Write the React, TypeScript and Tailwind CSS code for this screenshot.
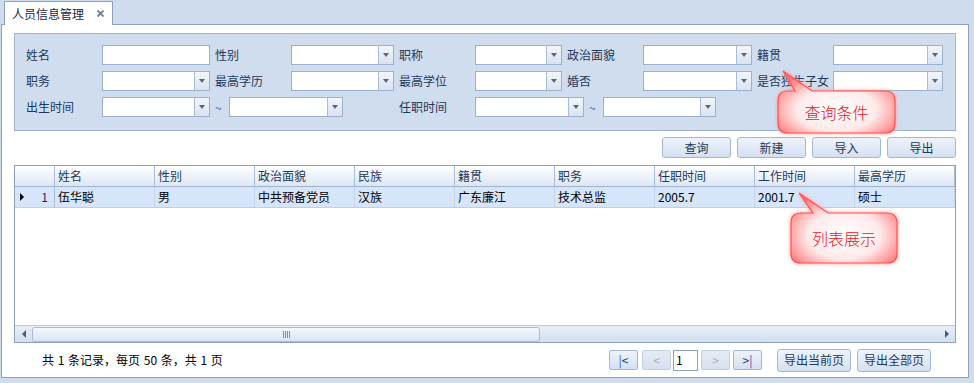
import type { ReactNode } from 'react'

const columns = ['姓名', '性别', '政治面貌', '民族', '籍贯', '职务', '任职时间', '工作时间', '最高学历']
const row = ['伍华聪', '男', '中共预备党员', '汉族', '广东廉江', '技术总监', '2005.7', '2001.7', '硕士']

function Label({ children, first = false }: { children: ReactNode; first?: boolean }) {
  return (
    <span
      className={
        'w-[76px] shrink-0 whitespace-nowrap text-[12px] leading-[20px] text-[#1e395b] ' +
        (first ? '' : 'ml-[5px]')
      }
    >
      {children}
    </span>
  )
}

function Field({ w, dd = true }: { w: string; dd?: boolean }) {
  return (
    <div className={'flex h-[20px] shrink-0 border border-[#9bb0cc] bg-white ' + w}>
      <div className="flex-1" />
      {dd && (
        <div className="flex w-[15px] items-center justify-center border-l border-[#a9bcd5] bg-gradient-to-b from-[#f3f6fb] to-[#d9e3f1]">
          <div className="h-0 w-0 border-x-[3px] border-t-[4px] border-x-transparent border-t-[#56667d]" />
        </div>
      )}
    </div>
  )
}

function Tilde() {
  return <span className="w-[19px] shrink-0 pl-[5px] pt-[2px] text-[12px] leading-[20px] text-[#3d5a99]">~</span>
}

function Btn({ children, w = 'w-[69px]', h = 'h-[21px]' }: { children: ReactNode; w?: string; h?: string }) {
  return (
    <div
      className={
        'flex items-center justify-center rounded-[3px] border border-[#a3b7d2] bg-gradient-to-b from-[#eef3fb] to-[#d4e0f1] text-[12px] text-[#1e395b] ' +
        w +
        ' ' +
        h
      }
    >
      {children}
    </div>
  )
}

function PageBtn({ children, off = false }: { children: ReactNode; off?: boolean }) {
  return (
    <div
      className={
        'flex h-[20px] w-[29px] items-center justify-center rounded-[2px] border text-[12px] ' +
        (off
          ? 'border-[#c2d0e3] bg-gradient-to-b from-[#e4ebf5] to-[#d6e1ef] text-[#9fb0c6]'
          : 'border-[#a3b7d2] bg-gradient-to-b from-[#eef3fb] to-[#d4e0f1] text-[#1e395b]')
      }
    >
      {children}
    </div>
  )
}

export default function App() {
  return (
    <div className="relative h-[383px] w-[974px] overflow-hidden bg-[#cfdcee] font-['Noto_Sans_CJK_SC','Noto_Sans',sans-serif]">
      {/* tab strip */}
      <div className="flex pl-[4px] pt-[1px]">
        <div className="relative z-10 -mb-px flex h-[24px] w-[109px] items-center border border-b-0 border-[#8ba0bc] bg-white pl-[7px] pr-[8px]">
          <span className="text-[12px] text-[#15294a]">人员信息管理</span>
          <svg className="ml-auto" width="7" height="7" viewBox="0 0 7 7">
            <path d="M0.5 0.5 L6.5 6.5 M6.5 0.5 L0.5 6.5" stroke="#6b7c93" strokeWidth="1.8" />
          </svg>
        </div>
      </div>

      <div className="ml-[1px] h-[354px] w-[968px] border border-[#8ba0bc] bg-white px-[12px] pt-[8px]">
        {/* query conditions */}
        <div className="h-[98px] border border-[#9fb3cf] bg-[#d0ddee] pl-[11px] pt-[11px]">
          <div className="flex h-[20px] items-center">
            <Label first>姓名</Label>
            <Field w="w-[108px]" dd={false} />
            <Label>性别</Label>
            <Field w="w-[103px]" />
            <Label>职称</Label>
            <Field w="w-[87px]" />
            <Label>政治面貌</Label>
            <Field w="w-[109px]" />
            <Label>籍贯</Label>
            <Field w="w-[110px]" />
          </div>
          <div className="mt-[6px] flex h-[20px] items-center">
            <Label first>职务</Label>
            <Field w="w-[108px]" />
            <Label>最高学历</Label>
            <Field w="w-[103px]" />
            <Label>最高学位</Label>
            <Field w="w-[87px]" />
            <Label>婚否</Label>
            <Field w="w-[109px]" />
            <Label>是否独生子女</Label>
            <Field w="w-[110px]" />
          </div>
          <div className="mt-[6px] flex h-[20px] items-center">
            <Label first>出生时间</Label>
            <Field w="w-[108px]" />
            <Tilde />
            <Field w="w-[114px]" />
            <div className="w-[56px] shrink-0" />
            <span className="w-[76px] shrink-0 text-[12px] leading-[20px] text-[#1e395b]">任职时间</span>
            <Field w="w-[109px]" />
            <Tilde />
            <Field w="w-[113px]" />
          </div>
        </div>

        {/* actions */}
        <div className="mt-[6px] flex justify-end gap-[6px]">
          <Btn>查询</Btn>
          <Btn>新建</Btn>
          <Btn>导入</Btn>
          <Btn>导出</Btn>
        </div>

        {/* grid */}
        <div className="mt-[7px] flex h-[178px] flex-col border border-[#8ba0bc] bg-white">
          <div className="flex h-[21px] shrink-0 border-b border-[#9fb3cf] bg-gradient-to-b from-white to-[#dce6f4]">
            <div className="w-[40px] shrink-0 border-r border-[#a9bcd5]" />
            {columns.map((c) => (
              <div
                key={c}
                className="flex w-[100px] shrink-0 items-center border-r border-[#a9bcd5] pl-[3px] text-[12px] text-[#1e395b]"
              >
                {c}
              </div>
            ))}
          </div>
          <div className="flex h-[21px] shrink-0 border-b border-[#bccfe8] bg-[#d6e5fa]">
            <div className="flex w-[40px] shrink-0 items-center border-r border-[#a9bcd5] pl-[5px] pr-[6px]">
              <div className="h-0 w-0 border-y-[4px] border-l-[4px] border-y-transparent border-l-black" />
              <span className="ml-auto text-[12px] text-[#3a1a4a]">1</span>
            </div>
            {row.map((v, i) => (
              <div
                key={i}
                className="flex w-[100px] shrink-0 items-center border-r border-[#c3d5ec] pl-[3px] text-[12px] text-black"
              >
                {v}
              </div>
            ))}
          </div>
          <div className="flex-1" />
          <div className="flex h-[17px] shrink-0 items-center border-t border-[#b9cae0] bg-gradient-to-b from-[#e7eef8] to-[#d3dff0]">
            <div className="flex w-[17px] shrink-0 items-center justify-center">
              <div className="h-0 w-0 border-y-[4px] border-r-[4px] border-y-transparent border-r-[#4a5a70]" />
            </div>
            <div className="flex h-[15px] w-[508px] items-center justify-center rounded-[3px] border border-[#a9bcd5] bg-gradient-to-b from-[#f4f8fd] to-[#d9e4f3]">
              <div className="flex gap-[1px]">
                <div className="h-[7px] w-px bg-[#7d8fa8]" />
                <div className="h-[7px] w-px bg-[#7d8fa8]" />
                <div className="h-[7px] w-px bg-[#7d8fa8]" />
                <div className="h-[7px] w-px bg-[#7d8fa8]" />
              </div>
            </div>
            <div className="flex-1" />
            <div className="flex w-[17px] shrink-0 items-center justify-center">
              <div className="h-0 w-0 border-y-[4px] border-l-[4px] border-y-transparent border-l-[#4a5a70]" />
            </div>
          </div>
        </div>

        {/* footer */}
        <div className="flex h-[34px] items-center pr-[25px]">
          <span className="whitespace-pre pl-[28px] text-[12px] text-black [word-spacing:1px]">
            共 1 条记录，每页 50 条，共 1 页
          </span>
          <div className="ml-auto flex items-center">
            <PageBtn>
              <span className="text-[#3d5fa8]">|</span>&lt;
            </PageBtn>
            <div className="ml-[4px]">
              <PageBtn off>&lt;</PageBtn>
            </div>
            <div className="ml-[2px] flex h-[21px] w-[25px] items-center border border-[#8ba0bc] bg-white pl-[2px] text-[12px] text-black">
              1
            </div>
            <div className="ml-[3px]">
              <PageBtn off>&gt;</PageBtn>
            </div>
            <div className="ml-[3px]">
              <PageBtn>
                &gt;<span className="text-[#6a3fa0]">|</span>
              </PageBtn>
            </div>
            <div className="ml-[15px]">
              <Btn w="w-[74px]" h="h-[23px]">导出当前页</Btn>
            </div>
            <div className="ml-[6px]">
              <Btn w="w-[74px]" h="h-[23px]">导出全部页</Btn>
            </div>
          </div>
        </div>
      </div>

      {/* callout: 查询条件 */}
      <div className="absolute left-[775px] top-[68px] h-[70px] w-[125px]">
        <svg className="drop-shadow-[0_0_2px_#ff9c9c]" width="125" height="70" viewBox="0 0 125 70">
          <defs>
            <radialGradient id="cg1" cx="50%" cy="62%" r="62%">
              <stop offset="0" stopColor="#ffffff" />
              <stop offset="0.55" stopColor="#ffeaea" />
              <stop offset="1" stopColor="#ff7676" />
            </radialGradient>
          </defs>
          <path
            d="M13 23 L20 23 L8 3 L37 23 L110 23 Q120 23 120 33 L120 55 Q120 65 110 65 L13 65 Q3 65 3 55 L3 33 Q3 23 13 23 Z"
            fill="url(#cg1)"
            stroke="#ff5252"
            strokeWidth="1.2"
          />
        </svg>
        <div className="absolute left-[3px] top-[23px] flex h-[42px] w-[117px] items-center justify-center text-[16px] font-light text-[#e8141c]">
          查询条件
        </div>
      </div>

      {/* callout: 列表展示 */}
      <div className="absolute left-[788px] top-[190px] h-[77px] w-[112px]">
        <svg className="drop-shadow-[0_0_2px_#ff9c9c]" width="112" height="77" viewBox="0 0 112 77">
          <defs>
            <radialGradient id="cg2" cx="50%" cy="60%" r="62%">
              <stop offset="0" stopColor="#ffffff" />
              <stop offset="0.55" stopColor="#ffeaea" />
              <stop offset="1" stopColor="#ff7676" />
            </radialGradient>
          </defs>
          <path
            d="M13 23 L25 23 L11 3 L40 23 L99 23 Q109 23 109 33 L109 63 Q109 73 99 73 L13 73 Q3 73 3 63 L3 33 Q3 23 13 23 Z"
            fill="url(#cg2)"
            stroke="#ff5252"
            strokeWidth="1.2"
          />
        </svg>
        <div className="absolute left-[3px] top-[23px] flex h-[50px] w-[106px] items-center justify-center text-[16px] font-light text-[#e8141c]">
          列表展示
        </div>
      </div>
    </div>
  )
}
